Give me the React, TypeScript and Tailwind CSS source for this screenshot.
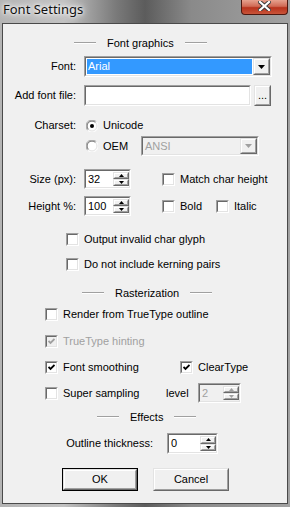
const sunkenOuter = "border border-t-[#a0a0a0] border-l-[#a0a0a0] border-r-white border-b-white";
const sunkenInner = "border border-t-[#696969] border-l-[#696969] border-r-[#e3e3e3] border-b-[#e3e3e3]";
const raisedOuter = "border border-t-[#e3e3e3] border-l-[#e3e3e3] border-r-[#696969] border-b-[#696969]";
const raisedInner = "border border-t-white border-l-white border-r-[#a0a0a0] border-b-[#a0a0a0]";

function Tri({ up, color, w, h }: { up?: boolean; color: string; w: number; h: number }) {
  return (
    <svg width={w} height={h} viewBox={`0 0 ${w} ${h}`}>
      {up ? <polygon points={`0,${h} ${w / 2},0 ${w},${h}`} fill={color} /> : <polygon points={`0,0 ${w},0 ${w / 2},${h}`} fill={color} />}
    </svg>
  );
}

function DropButton({ disabled }: { disabled?: boolean }) {
  return (
    <div className={`${raisedOuter} w-[17px] h-full bg-[#f0f0f0]`}>
      <div className={`${raisedInner} h-full flex items-center justify-center`}>
        <Tri color={disabled ? "#a0a0a0" : "#000"} w={7} h={4} />
      </div>
    </div>
  );
}

function Combo({ className, text, selected, disabled }: { className: string; text: string; selected?: boolean; disabled?: boolean }) {
  return (
    <div className={`${sunkenOuter} ${className}`}>
      <div className={`${sunkenInner} flex h-full ${disabled ? "bg-[#f0f0f0]" : "bg-white"}`}>
        <div className="flex-1 p-[1px] flex">
          <div className={`flex-1 flex items-center pl-[1px] ${selected ? "bg-[#3399ff] text-white" : ""} ${disabled ? "text-[#a0a0a0]" : ""}`}>
            {text}
          </div>
        </div>
        <DropButton disabled={disabled} />
      </div>
    </div>
  );
}

function SpinHalf({ up, disabled }: { up?: boolean; disabled?: boolean }) {
  return (
    <div className={`${raisedOuter} flex-1 bg-[#f0f0f0]`}>
      <div className={`${raisedInner} h-full flex items-center justify-center`}>
        <Tri up={up} color={disabled ? "#a0a0a0" : "#000"} w={5} h={3} />
      </div>
    </div>
  );
}

function Spin({ className, value, disabled }: { className: string; value: string; disabled?: boolean }) {
  return (
    <div className={`${sunkenOuter} ${className}`}>
      <div className={`${sunkenInner} flex h-full ${disabled ? "bg-[#f0f0f0] text-[#a0a0a0]" : "bg-white"}`}>
        <div className="flex-1 flex items-center pl-[2px]">{value}</div>
        <div className="flex flex-col w-[16px] py-[1px]">
          <SpinHalf up disabled={disabled} />
          <SpinHalf disabled={disabled} />
        </div>
      </div>
    </div>
  );
}

function Box({ checked, disabled }: { checked?: boolean; disabled?: boolean }) {
  return (
    <div className={`${sunkenOuter} w-[13px] h-[13px] shrink-0`}>
      <div className={`${sunkenInner} h-full flex items-center justify-center ${disabled ? "bg-[#f0f0f0]" : "bg-white"}`}>
        {checked && (
          <svg width="7" height="7" viewBox="0 0 7 7">
            <path d="M0.5 3 L2.5 5 L6.5 1" stroke={disabled ? "#a0a0a0" : "#000"} strokeWidth="1.8" fill="none" />
          </svg>
        )}
      </div>
    </div>
  );
}

function Check({ label, checked, disabled, className = "" }: { label: string; checked?: boolean; disabled?: boolean; className?: string }) {
  return (
    <div className={`flex items-center gap-[5px] ${className}`}>
      <Box checked={checked} disabled={disabled} />
      <span className={disabled ? "text-[#a0a0a0]" : ""}>{label}</span>
    </div>
  );
}

function Radio({ checked }: { checked?: boolean }) {
  return (
    <svg width="12" height="12" viewBox="0 0 12 12" className="shrink-0">
      <circle cx="6" cy="6" r="5.5" fill="#fff" />
      <path d="M1.7 10.3 A5.5 5.5 0 0 1 10.3 1.7" stroke="#a0a0a0" fill="none" />
      <path d="M10.3 1.7 A5.5 5.5 0 0 1 1.7 10.3" stroke="#fff" fill="none" />
      <path d="M2.5 9.5 A4.5 4.5 0 0 1 9.5 2.5" stroke="#696969" fill="none" />
      <path d="M9.5 2.5 A4.5 4.5 0 0 1 2.5 9.5" stroke="#e3e3e3" fill="none" />
      {checked && <circle cx="6" cy="6" r="2" fill="#000" />}
    </svg>
  );
}

function Header({ title, className }: { title: string; className: string }) {
  return (
    <div className={`flex items-center gap-[11px] h-[14px] ${className}`}>
      <div className="w-[22px] h-[2px] border-t border-t-[#a0a0a0] border-b border-b-white" />
      <span>{title}</span>
      <div className="w-[22px] h-[2px] border-t border-t-[#a0a0a0] border-b border-b-white" />
    </div>
  );
}

function Button({ label, isDefault, className }: { label: string; isDefault?: boolean; className: string }) {
  const inner = (
    <div className={`${raisedOuter} h-full`}>
      <div className={`${raisedInner} h-full flex items-center justify-center`}>{label}</div>
    </div>
  );
  return isDefault ? <div className={`border border-black ${className}`}>{inner}</div> : <div className={className}>{inner}</div>;
}

export default function App() {
  return (
    <div className="w-[290px] h-[507px] flex flex-col bg-[linear-gradient(90deg,#b4b4b4_0%,#c2c2c2_22%,#7a7a7a_40%,#5c5c5c_50%,#8a8a8a_66%,#a2a2a2_100%)] font-['Liberation_Sans',Arial,sans-serif] text-[11px] text-black overflow-hidden">
      <div className="h-[23px] shrink-0 flex justify-between">
        <div className="pl-[3px] pt-[1px] font-['Noto_Sans',sans-serif] text-[13px] leading-[16px] text-[#111] [text-shadow:0_0_6px_#fff,0_0_10px_#fff,0_0_3px_#fff]">
          Font Settings
        </div>
        <div className="mr-[2px] w-[47px] h-[15px] rounded-b-[4px] border border-t-0 border-[#4d1810] bg-[linear-gradient(180deg,#e6a18e_0%,#d06a55_45%,#b8321c_55%,#c9553a_100%)] flex justify-center items-start pt-[1px]">
          <svg width="13" height="10" viewBox="0 0 13 10">
            <path d="M2 1 L11 9 M11 1 L2 9" stroke="#3a3a3a" strokeWidth="4" strokeLinecap="square" />
            <path d="M2 1 L11 9 M11 1 L2 9" stroke="#fff" strokeWidth="2.2" strokeLinecap="square" />
          </svg>
        </div>
      </div>
      <div className="ml-[2px] w-[286px] h-[481px] border border-[#4a4a4a] bg-[#f0f0f0] flex flex-col">
        <Header title="Font graphics" className="mt-[12px] ml-[71px]" />

        <div className="mt-[6px] h-[21px] flex items-center">
          <div className="w-[73px] text-right">Font:</div>
          <Combo className="ml-[8px] w-[188px] h-[21px]" text="Arial" selected />
        </div>

        <div className="mt-[8px] h-[21px] flex items-center">
          <div className="w-[73px] text-right">Add font file:</div>
          <div className={`${sunkenOuter} ml-[8px] w-[167px] h-[21px]`}>
            <div className={`${sunkenInner} h-full bg-white`} />
          </div>
          <Button label="..." className="ml-[3px] w-[17px] h-[21px]" />
        </div>

        <div className="mt-[13px] h-[13px] flex items-center">
          <div className="w-[73px] text-right">Charset:</div>
          <div className="ml-[10px] flex items-center gap-[5px]">
            <Radio checked />
            <span>Unicode</span>
          </div>
        </div>

        <div className="mt-[4px] h-[20px] flex items-center">
          <div className="w-[73px]" />
          <div className="ml-[10px] w-[55px] flex items-center gap-[5px]">
            <Radio />
            <span>OEM</span>
          </div>
          <Combo className="w-[118px] h-[20px]" text="ANSI" disabled />
        </div>

        <div className="mt-[13px] h-[20px] flex items-center">
          <div className="w-[73px] text-right">Size (px):</div>
          <Spin className="ml-[8px] w-[47px] h-[20px]" value="32" />
          <Check className="ml-[31px]" label="Match char height" />
        </div>

        <div className="mt-[7px] h-[20px] flex items-center">
          <div className="w-[73px] text-right">Height %:</div>
          <Spin className="ml-[8px] w-[47px] h-[20px]" value="100" />
          <Check className="ml-[31px] w-[54px]" label="Bold" />
          <Check label="Italic" />
        </div>

        <Check className="mt-[16px] h-[14px] ml-[63px]" label="Output invalid char glyph" />
        <Check className="mt-[11px] h-[14px] ml-[63px]" label="Do not include kerning pairs" />

        <Header title="Rasterization" className="mt-[15px] ml-[79px]" />

        <Check className="mt-[7px] h-[14px] ml-[42px]" label="Render from TrueType outline" />
        <Check className="mt-[13px] h-[14px] ml-[42px]" label="TrueType hinting" checked disabled />

        <div className="mt-[12px] h-[14px] flex items-center ml-[42px]">
          <Check className="w-[135px]" label="Font smoothing" checked />
          <Check label="ClearType" checked />
        </div>

        <div className="mt-[9px] h-[20px] flex items-center ml-[42px]">
          <Check className="w-[121px]" label="Super sampling" />
          <span className="w-[32px]">level</span>
          <Spin className="w-[43px] h-[20px]" value="2" disabled />
        </div>

        <Header title="Effects" className="mt-[7px] ml-[94px]" />

        <div className="mt-[9px] h-[21px] flex items-center">
          <div className="w-[150px] text-right">Outline thickness:</div>
          <Spin className="ml-[14px] w-[51px] h-[21px]" value="0" />
        </div>

        <div className="mt-[14px] h-[23px] flex">
          <Button label="OK" isDefault className="ml-[59px] w-[76px] h-[23px]" />
          <Button label="Cancel" className="ml-[15px] w-[76px] h-[23px]" />
        </div>
      </div>
    </div>
  );
}
